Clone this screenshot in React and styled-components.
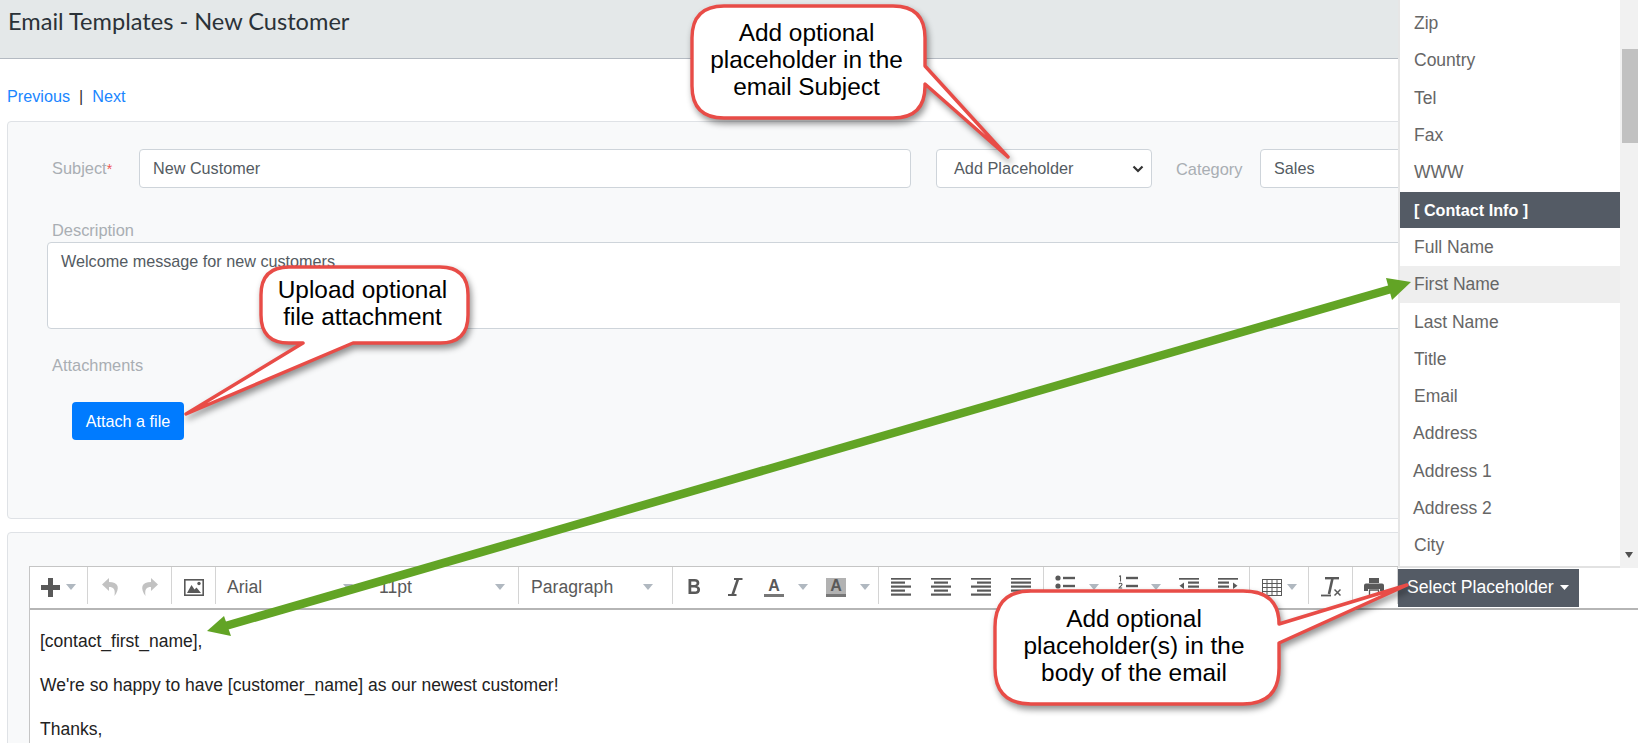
import React from 'react';
import styled, { createGlobalStyle } from 'styled-components';

const Global = createGlobalStyle`
  html, body { margin: 0; padding: 0; background: #fff; overflow: hidden; }
  body { font-family: "Liberation Sans", Arial, sans-serif; }
  * { box-sizing: border-box; }
`;

const Page = styled.div`
  position: relative;
  width: 1638px;
  height: 743px;
  overflow: hidden;
`;
const Header = styled.header`
  height: 59px;
  background: #e4e8e9;
  border-bottom: 1px solid #b4bac2;
  padding: 7px 0 0 8px;
`;
const Title = styled.h1`
  margin: 0;
  font: 400 23.6px/28px Lato, "Noto Sans", sans-serif;
  color: #2b3238;
`;
const Pager = styled.nav`
  display: flex;
  align-items: center;
  height: 24px;
  margin: 25px 0 13px 7px;
  font-size: 16.2px;
  color: #333;
`;
const PagerLink = styled.a`
  color: #1a86ff;
`;
const PagerSep = styled.span`
  margin: 0 9px;
`;
const Card = styled.section`
  margin-left: 7px;
  width: 1700px;
  background: #f8f9fa;
  border: 1px solid #dfe2e6;
  border-radius: 4px;
`;
const FormCard = styled(Card)`
  height: 398px;
  padding: 27px 0 0 40px;
`;
const EditorCard = styled(Card)`
  margin-top: 13px;
  height: 260px;
  padding: 33px 0 0 21px;
`;
const FieldRow = styled.div`
  display: flex;
  align-items: center;
  margin-left: 4px;
`;
const Label = styled.label`
  font-size: 16.4px;
  color: #a9aeb3;
  line-height: 20px;
`;
const Star = styled.span`
  color: #e55;
  font-size: 14px;
`;
const SubjectLabel = styled(Label)`
  width: 87px;
`;
const CategoryLabel = styled(Label)`
  width: 84px;
  margin-left: 24px;
`;
const Field = styled.div`
  display: flex;
  align-items: center;
  height: 39px;
  width: ${p => p.$w}px;
  padding-left: 13px;
  background: #fff;
  border: 1px solid #ced4da;
  border-radius: 4px;
  font-size: 16.2px;
  color: #545b62;
  flex-shrink: 0;
`;
const SelectField = styled(Field)`
  justify-content: space-between;
  margin-left: 25px;
  padding: 0 7px 0 17px;
  font-size: 16.3px;
`;
const BlockLabel = styled(Label)`
  display: block;
  margin: ${p => p.$top}px 0 0 4px;
`;
const TextArea = styled.div`
  margin: 2px 0 0 -1px;
  width: 1500px;
  height: 87px;
  padding: 7px 13px;
  background: #fff;
  border: 1px solid #ced4da;
  border-radius: 4px;
  font-size: 16.2px;
  line-height: 22px;
  color: #545b62;
`;
const PrimaryButton = styled.button`
  display: block;
  margin: 27px 0 0 24px;
  width: 112px;
  height: 38px;
  padding: 0;
  border: 0;
  border-radius: 4px;
  background: #007bff;
  color: #fff;
  font: 400 16.2px "Liberation Sans", Arial, sans-serif;
`;
const Editor = styled.div`
  background: #fff;
  border-left: 1px solid #c5c5c5;
  height: 100%;
`;
const Toolbar = styled.div`
  display: flex;
  height: 44px;
  border-top: 1px solid #c5c5c5;
  border-bottom: 2px solid #b5b5b5;
  color: #595959;
`;
const Group = styled.div`
  display: flex;
  align-items: center;
  flex-shrink: 0;
  width: ${p => p.$w}px;
  height: 37px;
  padding: 3px 0 0 ${p => p.$pl || 0}px;
  border-right: 1px solid ${p => (p.$last ? 'transparent' : '#d4d4d4')};
`;
const Slot = styled.div`
  display: flex;
  align-items: center;
  justify-content: center;
  flex-shrink: 0;
  width: ${p => p.$w}px;
  height: 34px;
  svg { flex-shrink: 0; }
`;
const Picker = styled.div`
  display: flex;
  align-items: center;
  justify-content: space-between;
  flex-shrink: 0;
  width: ${p => p.$w}px;
  height: 34px;
  padding: 0 10px 0 ${p => p.$pl}px;
  font-size: 17.6px;
  color: #595959;
`;
const BoldGlyph = styled.span`
  font: 700 22.5px/1 "Liberation Sans", sans-serif;
  color: #595959;
  transform: scaleX(0.84);
`;
const ColorGlyph = styled.span`
  display: flex;
  flex-direction: column;
  align-items: center;
  justify-content: flex-end;
  width: 20px;
  height: 19px;
  background: ${p => (p.$fill ? '#b2b2b2' : 'transparent')};
  font: 700 16px/15px "Liberation Sans", sans-serif;
  color: #595959;
  &::after {
    content: '';
    align-self: stretch;
    height: 3px;
    margin-top: 1px;
    background: #777;
  }
`;
const InsertButton = styled.button`
  display: flex;
  align-items: center;
  gap: 6px;
  align-self: center;
  width: 181px;
  height: 38px;
  margin-left: 0;
  padding: 0 0 0 9px;
  border: 0;
  background: #545b65;
  color: #fff;
  font: 400 17.6px "Liberation Sans", Arial, sans-serif;
  white-space: nowrap;
`;
const Body = styled.div`
  padding: 20px 0 0 10px;
  font-size: 17.5px;
  line-height: 22px;
  color: #222;
`;
const Para = styled.p`
  margin: 0 0 22px;
`;
const Menu = styled.aside`
  position: absolute;
  top: 0;
  right: 0;
  display: flex;
  width: 240px;
  height: 568px;
`;
const MenuList = styled.ul`
  width: 222px;
  margin: 0;
  padding: 5px 0 0;
  list-style: none;
  background: #fff;
  border-left: 2px solid #e6e6e6;
  border-bottom: 2px solid #e2e2e2;
  overflow: hidden;
`;
const MenuItem = styled.li`
  display: flex;
  align-items: center;
  height: 37.3px;
  padding-left: ${p => p.$pl || 14}px;
  font-size: 17.5px;
  color: #666;
  background: ${p => (p.$hover ? '#eee' : 'transparent')};
`;
const MenuHeader = styled(MenuItem)`
  background: #545b65;
  color: #fff;
  font-weight: 700;
  font-size: 16.2px;
  height: 36px;
  margin-top: 0.7px;
  margin-bottom: 0.6px;
`;
const ScrollTrack = styled.div`
  position: relative;
  width: 18px;
  background: #f1f1f1;
`;
const ScrollThumb = styled.div`
  position: absolute;
  top: 49px;
  right: 0;
  width: 16px;
  height: 94px;
  background: #c1c1c1;
`;
const ScrollArrow = styled.div`
  position: absolute;
  top: 552px;
  left: 5px;
  border-style: solid;
  border-width: 6px 4.5px 0;
  border-color: #505050 transparent transparent;
`;
const Overlay = styled.svg`
  position: absolute;
  top: 0;
  left: 0;
  width: 1638px;
  height: 743px;
  pointer-events: none;
`;
const CalloutShape = styled.path`
  fill: #fff;
  stroke: #e84c47;
  stroke-width: 3.4;
  stroke-linejoin: round;
  filter: drop-shadow(2px 4px 3px rgba(0, 0, 0, 0.42));
`;
const CalloutText = styled.div`
  position: absolute;
  left: ${p => p.$x}px;
  top: ${p => p.$y}px;
  width: ${p => p.$w}px;
  text-align: center;
  font-size: 24.4px;
  line-height: 27.2px;
  color: #000;
`;

const Caret = () => (
  <svg width="10" height="6" viewBox="0 0 10 6"><path d="M0 0h10L5 6z" fill="#b0b8c0" /></svg>
);
const Chevron = () => (
  <svg width="12" height="8" viewBox="0 0 12 8"><path d="M1.5 1.5L6 6l4.5-4.5" fill="none" stroke="#333" strokeWidth="2.2" /></svg>
);
const Plus = () => (
  <svg width="19" height="19" viewBox="0 0 19 19"><path d="M7 0h5v7h7v5h-7v7H7v-7H0V7h7z" fill="#595959" /></svg>
);
const Undo = ({ flip }) => (
  <svg width="18" height="20" viewBox="0 0 18 20" style={flip ? { transform: 'scaleX(-1)' } : undefined}>
    <path d="M8 1L1 7.5 8 14v-4c4.5 0 6.5 2 5.5 9C16 15.500 17.500 12 16.500 9 15.500 6.500 12.500 5 8 5z" fill="#c2c2c2" />
  </svg>
);
const ImageIcon = () => (
  <svg width="20" height="17" viewBox="0 0 20 17">
    <rect x="0.8" y="0.8" width="18.400" height="15.400" fill="#fff" stroke="#595959" strokeWidth="1.600" />
    <path d="M3 14l4.500-8 3 4.500 2-2 4.500 5.500z" fill="#595959" />
    <circle cx="15" cy="4.500" r="1.700" fill="#595959" />
  </svg>
);
const AlignIcon = ({ mode }) => {
  const short = [1, 3];
  return (
    <svg width="20" height="18" viewBox="0 0.500 20 18">
      {[0, 1, 2, 3, 4].map(i => {
        const s = short.includes(i) && mode !== 'justify';
        const w = s ? 14 : 20;
        const x = !s ? 0 : mode === 'left' ? 0 : mode === 'right' ? 6 : 3;
        return <rect key={i} x={x} y={i * 4} width={w} height="2.200" fill="#595959" />;
      })}
    </svg>
  );
};
const BulletIcon = () => (
  <svg width="20" height="18" viewBox="0 3 20 18" style={{ overflow: 'visible' }}>
    <circle cx="3" cy="3" r="2.600" fill="#595959" />
    <circle cx="3" cy="11" r="2.600" fill="#595959" />
    <rect x="8" y="1.800" width="12" height="2.400" fill="#595959" />
    <rect x="8" y="9.800" width="12" height="2.400" fill="#595959" />
  </svg>
);
const NumberIcon = () => (
  <svg width="20" height="18" viewBox="0 3 20 18" style={{ overflow: 'visible' }}>
    <path d="M2.500 0.500v6M1.200 1.700l1.300-1.200" fill="none" stroke="#595959" strokeWidth="1.100" />
    <path d="M1 9.200c.5-1.400 3-1.300 3 .3 0 1.200-2.500 2.200-3 3.500h3.200" fill="none" stroke="#595959" strokeWidth="1.100" />
    <rect x="8" y="1.800" width="12" height="2.400" fill="#595959" />
    <rect x="8" y="9.800" width="12" height="2.400" fill="#595959" />
  </svg>
);
const IndentIcon = ({ out }) => (
  <svg width="20" height="18" viewBox="0 0.500 20 18" style={out ? undefined : { transform: 'scaleX(-1)' }}>
    <rect width="20" height="2.200" fill="#595959" />
    <rect x="9" y="4" width="11" height="2.200" fill="#595959" />
    <rect x="9" y="8" width="11" height="2.200" fill="#595959" />
    <rect x="9" y="12" width="11" height="2.200" fill="#595959" />
    <rect y="16" width="20" height="2.200" fill="#595959" />
    <path d="M5 5v6.500L0.500 8.200z" fill="#595959" />
  </svg>
);
const TableIcon = () => (
  <svg width="20" height="17" viewBox="0 0 20 17" fill="none" stroke="#595959" strokeWidth="1">
    <rect x="0.500" y="0.500" width="19" height="16" />
    <path d="M0 4.500h20M0 8.500h20M0 12.500h20M5 0v17M10 0v17M15 0v17" />
  </svg>
);
const ClearIcon = () => (
  <svg width="20" height="22" viewBox="0 0 20 22" fill="none" stroke="#595959">
    <path d="M4 2.200h14" strokeWidth="2.400" />
    <path d="M11.500 2.200L8 18" strokeWidth="2.600" />
    <path d="M0 19.500h10" strokeWidth="1.800" />
    <path d="M13.500 13.500l6 6M19.500 13.500l-6 6" strokeWidth="1.500" />
  </svg>
);
const PrintIcon = () => (
  <svg width="20" height="19" viewBox="0 0 20 19">
    <path d="M5 0h10v5H5z" fill="#595959" />
    <path d="M2 5.500h16a2 2 0 0 1 2 2V13h-4v-2H4v2H0V7.500a2 2 0 0 1 2-2z" fill="#595959" />
    <path d="M5.500 12h9v6.500h-9z" fill="#fff" stroke="#595959" strokeWidth="1.300" />
  </svg>
);
const WhiteCaret = () => (
  <svg width="9" height="5" viewBox="0 0 9 5"><path d="M0 0h9L4.500 5z" fill="#fff" /></svg>
);

const menuBefore = ['Zip', 'Country', 'Tel', 'Fax', 'WWW'];
const menuAfter = [
  { t: 'Full Name' },
  { t: 'First Name', hover: true },
  { t: 'Last Name' },
  { t: 'Title' },
  { t: 'Email' },
  { t: 'Address', pl: 13 },
  { t: 'Address 1', pl: 13 },
  { t: 'Address 2', pl: 13 },
  { t: 'City' },
];

export default function App() {
  return (
    <Page>
      <Global />
      <Header><Title>Email Templates - New Customer</Title></Header>
      <Pager>
        <PagerLink>Previous</PagerLink>
        <PagerSep>|</PagerSep>
        <PagerLink>Next</PagerLink>
      </Pager>
      <FormCard>
        <FieldRow>
          <SubjectLabel>Subject<Star>*</Star></SubjectLabel>
          <Field $w={772}>New Customer</Field>
          <SelectField $w={216}>Add Placeholder<Chevron /></SelectField>
          <CategoryLabel>Category</CategoryLabel>
          <Field $w={300}>Sales</Field>
        </FieldRow>
        <BlockLabel $top={32}>Description</BlockLabel>
        <TextArea>Welcome message for new customers</TextArea>
        <BlockLabel $top={26}>Attachments</BlockLabel>
        <PrimaryButton>Attach a file</PrimaryButton>
      </FormCard>
      <EditorCard>
        <Editor>
          <Toolbar>
            <Group $w={58} $pl={6}><Slot $w={28}><Plus /></Slot><Slot $w={14}><Caret /></Slot></Group>
            <Group $w={84}><Slot $w={44}><Undo /></Slot><Slot $w={36}><Undo flip /></Slot></Group>
            <Group $w={44}><Slot $w={43}><ImageIcon /></Slot></Group>
            <Group $w={303}>
              <Picker $w={147} $pl={11}>Arial<Caret /></Picker>
              <Picker $w={152} $pl={16}>11pt<Caret /></Picker>
            </Group>
            <Group $w={154}><Picker $w={144} $pl={12}>Paragraph<Caret /></Picker></Group>
            <Group $w={206}>
              <Slot $w={43}><BoldGlyph>B</BoldGlyph></Slot>
              <Slot $w={38}>
                <svg width="16" height="18" viewBox="0 0 16 18" fill="none" stroke="#595959">
                  <path d="M7 1h8.500M1 17h8.500" strokeWidth="1.800" />
                  <path d="M11 1L5.500 17" strokeWidth="2.600" />
                </svg>
              </Slot>
              <Slot $w={40}><ColorGlyph>A</ColorGlyph></Slot>
              <Slot $w={18}><Caret /></Slot>
              <Slot $w={48}><ColorGlyph $fill>A</ColorGlyph></Slot>
              <Slot $w={10}><Caret /></Slot>
            </Group>
            <Group $w={165} $pl={2}>
              <Slot $w={40}><AlignIcon mode="left" /></Slot>
              <Slot $w={40}><AlignIcon mode="center" /></Slot>
              <Slot $w={40}><AlignIcon mode="right" /></Slot>
              <Slot $w={40}><AlignIcon mode="justify" /></Slot>
            </Group>
            <Group $w={206}>
              <Slot $w={42}><BulletIcon /></Slot>
              <Slot $w={15}><Caret /></Slot>
              <Slot $w={53}><NumberIcon /></Slot>
              <Slot $w={4}><Caret /></Slot>
              <Slot $w={62}><IndentIcon out /></Slot>
              <Slot $w={16}><IndentIcon /></Slot>
            </Group>
            <Group $w={59} $pl={10}><Slot $w={24}><TableIcon /></Slot><Slot $w={16}><Caret /></Slot></Group>
            <Group $w={44}><Slot $w={43}><ClearIcon /></Slot></Group>
            <Group $w={45}><Slot $w={41}><PrintIcon /></Slot></Group>
            <InsertButton>Select Placeholder<WhiteCaret /></InsertButton>
          </Toolbar>
          <Body>
            <Para>[contact_first_name],</Para>
            <Para>We're so happy to have [customer_name] as our newest customer!</Para>
            <Para>Thanks,</Para>
          </Body>
        </Editor>
      </EditorCard>
      <Menu>
        <MenuList>
          {menuBefore.map(t => <MenuItem key={t}>{t}</MenuItem>)}
          <MenuHeader>[ Contact Info ]</MenuHeader>
          {menuAfter.map(i => <MenuItem key={i.t} $hover={i.hover} $pl={i.pl}>{i.t}</MenuItem>)}
        </MenuList>
        <ScrollTrack><ScrollThumb /><ScrollArrow /></ScrollTrack>
      </Menu>
      <Overlay viewBox="0 0 1638 743">
        <path d="M1391 289L225.500 626" stroke="#62a425" strokeWidth="8.500" />
        <path d="M1411 282L1386 278 1392 300z" fill="#62a425" />
        <path d="M207 631L224 616 231 636z" fill="#62a425" />
        <CalloutShape d="M724 6H893Q925 6 925 38V66L1008 157 925 84V86Q925 118 893 118H724Q692 118 692 86V38Q692 6 724 6Z" />
        <CalloutShape d="M289 267H440Q468 267 468 295V315Q468 343 440 343H353L186 414 303 343H289Q261 343 261 315V295Q261 267 289 267Z" />
        <CalloutShape d="M1031 591H1243Q1279 591 1279 624L1407 585 1279 643V668Q1279 704 1243 704H1031Q995 704 995 668V627Q995 591 1031 591Z" />
      </Overlay>
      <CalloutText $x={690} $y={19} $w={233}>Add optional<br />placeholder in the<br />email Subject</CalloutText>
      <CalloutText $x={259} $y={276} $w={207}>Upload optional<br />file attachment</CalloutText>
      <CalloutText $x={992} $y={605} $w={284}>Add optional<br />placeholder(s) in the<br />body of the email</CalloutText>
    </Page>
  );
}
